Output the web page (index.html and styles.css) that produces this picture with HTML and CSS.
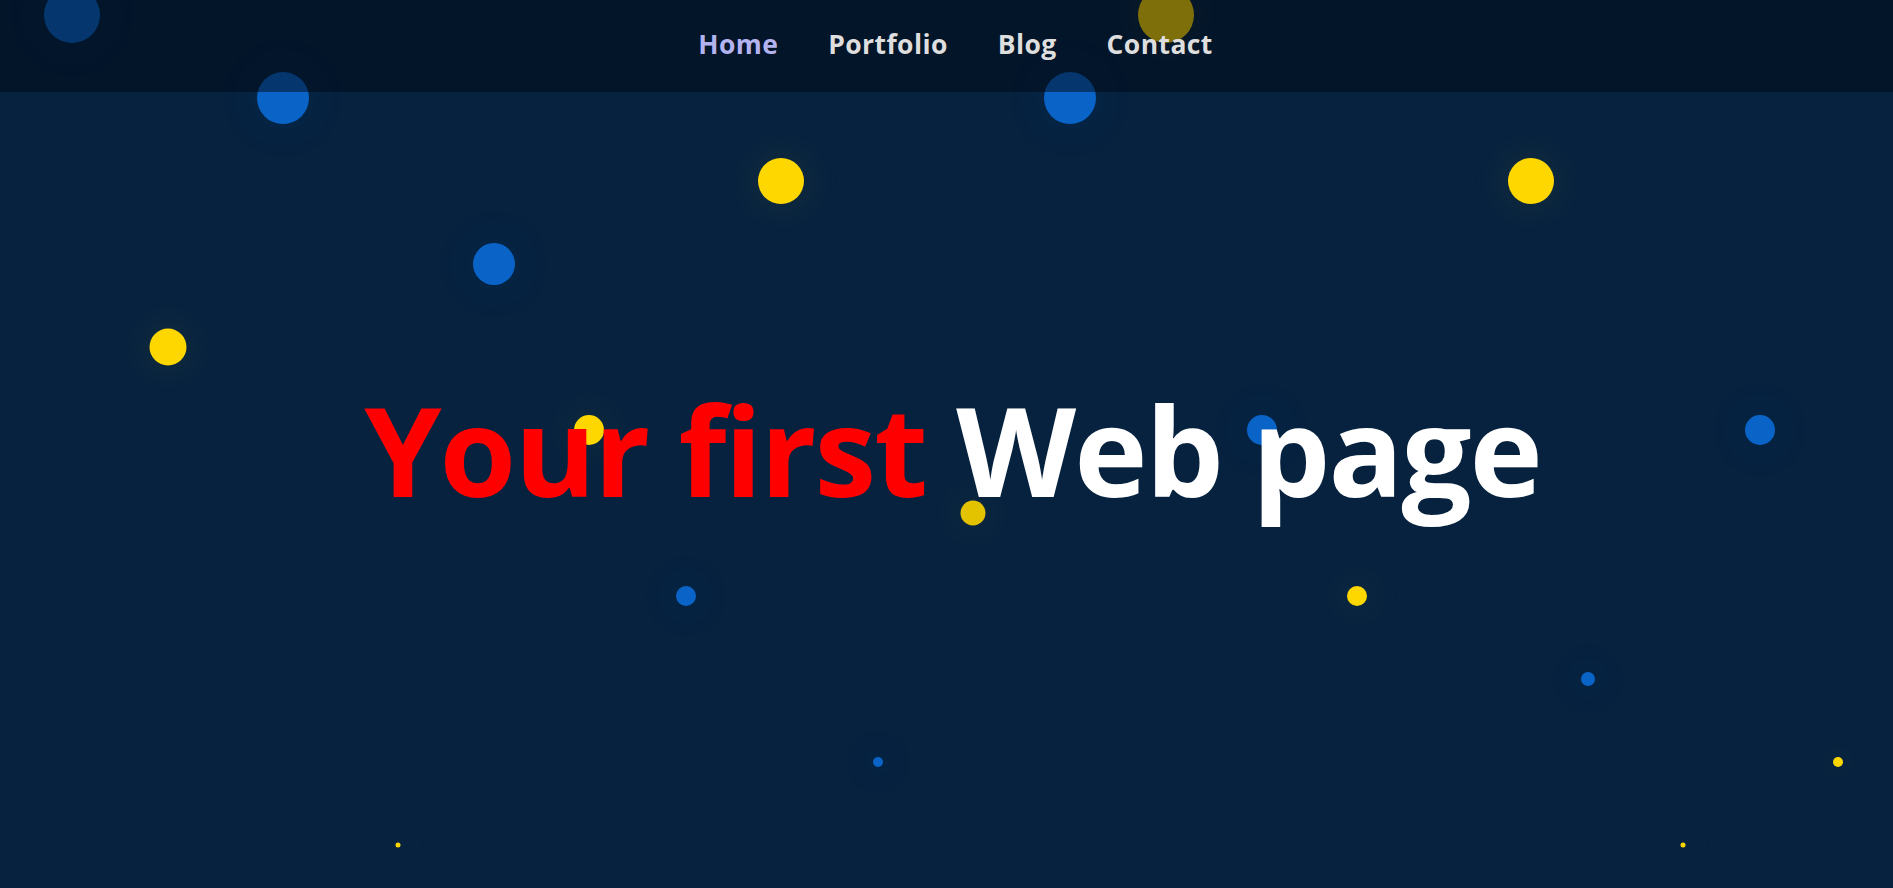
FILE: index.html
```html
<!DOCTYPE html>
<html lang="en">
<head>
<meta charset="utf-8">
<title>Your first Web page</title>
<link rel="stylesheet" href="styles.css">
</head>
<body>
<div class="particles" aria-hidden="true">
  <span class="dot blue" style="left:72px;top:15px;width:56px;height:56px"></span>
  <span class="dot blue" style="left:283px;top:98px;width:52px;height:52px"></span>
  <span class="dot blue" style="left:1070px;top:98px;width:52px;height:52px"></span>
  <span class="dot yellow" style="left:1166px;top:15px;width:56px;height:56px"></span>
  <span class="dot yellow" style="left:781px;top:181px;width:46px;height:46px"></span>
  <span class="dot yellow" style="left:1531px;top:181px;width:46px;height:46px"></span>
  <span class="dot blue" style="left:494px;top:264px;width:42px;height:42px"></span>
  <span class="dot yellow" style="left:168px;top:347px;width:37px;height:37px"></span>
  <span class="dot yellow" style="left:589px;top:430px;width:30px;height:30px"></span>
  <span class="dot blue" style="left:1262px;top:430px;width:30px;height:30px"></span>
  <span class="dot blue" style="left:1760px;top:430px;width:30px;height:30px"></span>
  <span class="dot yellow dim" style="left:973px;top:513px;width:25px;height:25px"></span>
  <span class="dot blue" style="left:686px;top:596px;width:20px;height:20px"></span>
  <span class="dot yellow" style="left:1357px;top:596px;width:20px;height:20px"></span>
  <span class="dot blue" style="left:1588px;top:679px;width:14px;height:14px"></span>
  <span class="dot blue" style="left:878px;top:762px;width:10px;height:10px"></span>
  <span class="dot yellow" style="left:1838px;top:762px;width:10px;height:10px"></span>
  <span class="dot yellow" style="left:398px;top:845px;width:5px;height:5px"></span>
  <span class="dot yellow" style="left:1683px;top:845px;width:5px;height:5px"></span>
</div>

<header class="site-header">
  <nav class="main-nav">
    <ul class="nav-list">
      <li><a class="nav-link active" href="#">Home</a></li>
      <li><a class="nav-link" href="#">Portfolio</a></li>
      <li><a class="nav-link" href="#">Blog</a></li>
      <li><a class="nav-link" href="#">Contact</a></li>
    </ul>
  </nav>
</header>

<main class="hero">
  <h1 class="hero-title"><span class="accent">Your first</span> Web page</h1>
</main>
</body>
</html>
```

FILE: styles.css
```css
html, body {
  margin: 0;
  padding: 0;
}

body {
  background: #06223f;
  height: 888px;
  overflow: hidden;
  font-family: "Open Sans", "DejaVu Sans", sans-serif;
  position: relative;
}

.particles {
  position: absolute;
  inset: 0;
  z-index: 0;
  pointer-events: none;
}

.dot {
  position: absolute;
  border-radius: 50%;
  transform: translate(-50%, -50%);
}

.dot.blue {
  background: #0a64c8;
  box-shadow: 0 0 40px 8px rgba(10, 100, 200, 0.06);
}

.dot.yellow {
  background: #ffd700;
  box-shadow: 0 0 40px 8px rgba(255, 215, 0, 0.06);
}

.dot.yellow.dim {
  background: #e3c200;
}

.site-header {
  position: relative;
  z-index: 2;
  height: 92px;
  background: rgba(0, 8, 20, 0.5);
  display: flex;
  align-items: center;
  justify-content: center;
  padding-left: 18px;
}

.nav-list {
  list-style: none;
  margin: 0;
  padding: 0;
  display: flex;
  gap: 50px;
  transform: translateY(-2px);
}

.nav-link {
  text-decoration: none;
  color: #dedede;
  font-weight: 700;
  font-size: 26.5px;
  letter-spacing: 0.4px;
}

.nav-link.active {
  color: #b3b3f0;
}

.hero {
  position: relative;
  z-index: 1;
  padding-top: 295px;
  text-align: center;
  padding-left: 12px;
}

.hero-title {
  margin: 0;
  font-size: 124px;
  line-height: 1;
  font-weight: 700;
  color: #ffffff;
  letter-spacing: -2px;
}

.accent {
  color: #ff0000;
}
```
